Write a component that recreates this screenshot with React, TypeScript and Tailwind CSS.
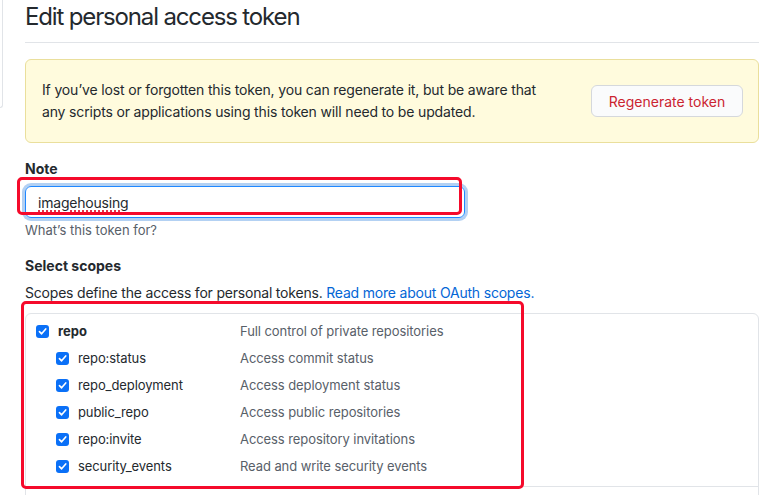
import React from "react";

const scopes = [
  { name: "repo:status", desc: "Access commit status" },
  { name: "repo_deployment", desc: "Access deployment status" },
  { name: "public_repo", desc: "Access public repositories" },
  { name: "repo:invite", desc: "Access repository invitations" },
  { name: "security_events", desc: "Read and write security events" },
];

function Check() {
  return (
    <span className="flex h-[13px] w-[13px] shrink-0 items-center justify-center rounded-[3px] bg-[#0a70f7]">
      <svg width="9" height="9" viewBox="0 0 10 10" fill="none">
        <path d="M1.6 5.2 L4 7.6 L8.6 2.2" stroke="white" strokeWidth="1.8" strokeLinecap="round" strokeLinejoin="round" />
      </svg>
    </span>
  );
}

export default function App() {
  return (
    <div className="relative flex h-[495px] w-[764px] overflow-hidden bg-white font-['Inter',sans-serif] text-[#24292e]">
      <div className="w-[3px] shrink-0">
        <div className="h-[108px] rounded-br-[4px] border-b border-r border-[#e1e4e8]" />
      </div>
      <div className="ml-[22px] w-[734px] shrink-0">
        <div className="h-[43px] border-b border-[#e1e4e8]">
          <h2 className="pt-[2px] text-[24px] leading-[30px] font-normal tracking-[-1.15px]">Edit personal access token</h2>
        </div>
        <div className="mt-[16px] flex h-[84px] items-center justify-between rounded-[6px] border border-[#eadf9c] bg-[#fffbdd] pl-[16px] pr-[15px]">
          <p className="text-[14px] leading-[22px] tracking-[-0.16px]">
            If you’ve lost or forgotten this token, you can regenerate it, but be aware that
            <br />
            any scripts or applications using this token will need to be updated.
          </p>
          <button className="h-[32px] w-[152px] rounded-[6px] border border-[#d5d8dc] bg-[#fafbfc] text-[14px] text-[#cb2431]">
            Regenerate token
          </button>
        </div>
        <div className="mt-[17px] text-[14px] font-bold leading-[18px]">Note</div>
        <div className="mt-[8px] flex h-[32px] w-[440px] items-center rounded-[6px] border border-[#2188ff] pl-[12px] shadow-[0_0_0_3px_rgba(3,102,214,0.3)] text-[14px] tracking-[-0.2px]">
          <span className="underline decoration-[#e0334a] decoration-dotted decoration-[1.5px] underline-offset-[3px]">imagehousing</span>
        </div>
        <div className="mt-[3px] text-[13px] leading-[18px] text-[#586069]">What’s this token for?</div>
        <div className="mt-[18px] text-[14px] font-bold leading-[18px]">Select scopes</div>
        <div className="mt-[9px] text-[14px] leading-[18px] tracking-[-0.2px]">
          Scopes define the access for personal tokens. <span className="text-[#0366d6]">Read more about OAuth scopes.</span>
        </div>
        <div className="mt-[11px] h-[200px] rounded-[6px] border border-[#e1e4e8]">
          <div className="flex h-[173px] flex-col border-b border-[#e1e4e8] pt-[4px]">
            <div className="flex h-[27px] items-center">
              <div className="flex w-[214px] items-center pl-[10px]">
                <Check />
                <span className="ml-[9px] text-[13px] font-bold">repo</span>
              </div>
              <span className="text-[13px] tracking-[-0.08px] text-[#586069]">Full control of private repositories</span>
            </div>
            {scopes.map((s) => (
              <div key={s.name} className="flex h-[27px] items-center">
                <div className="flex w-[214px] items-center pl-[30px]">
                  <Check />
                  <span className="ml-[9px] text-[13px] tracking-[-0.1px]">{s.name}</span>
                </div>
                <span className="text-[13px] tracking-[-0.08px] text-[#586069]">{s.desc}</span>
              </div>
            ))}
          </div>
        </div>
      </div>
      <div className="absolute left-[17px] top-[177px] h-[38px] w-[445px] rounded-[5px] border-[3px] border-[#f50a2b]" />
      <div className="absolute left-[21px] top-[301px] h-[188px] w-[503px] rounded-[5px] border-[3px] border-[#f50a2b]" />
    </div>
  );
}
